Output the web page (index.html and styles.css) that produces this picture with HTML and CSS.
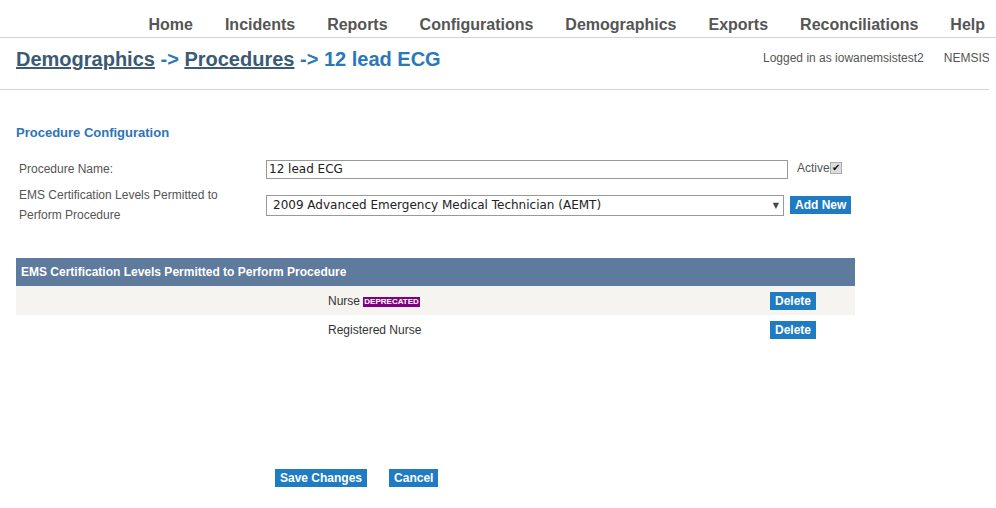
FILE: index.html
```html
<!DOCTYPE html>
<html>
<head>
<meta charset="utf-8">
<title>Procedure Configuration</title>
<link rel="stylesheet" href="styles.css">
</head>
<body>
<nav class="topnav">
  <a class="nav-item">Home</a>
  <a class="nav-item">Incidents</a>
  <a class="nav-item">Reports</a>
  <a class="nav-item">Configurations</a>
  <a class="nav-item">Demographics</a>
  <a class="nav-item">Exports</a>
  <a class="nav-item">Reconciliations</a>
  <a class="nav-item">Help</a>
</nav>
<header class="crumbbar">
  <h1 class="crumbs"><a class="crumb-link">Demographics</a> -&gt; <a class="crumb-link">Procedures</a> -&gt; 12 lead ECG</h1>
  <div class="userinfo"><span>Logged in as iowanemsistest2</span><span class="nemsis">NEMSIS 3</span></div>
</header>
<main class="content">
  <h2 class="section-title">Procedure Configuration</h2>
  <div class="form">
    <div class="label">Procedure Name:</div>
    <div class="field"><div class="textbox">12 lead ECG</div></div>
    <div class="extra active">Active<span class="check">&#10004;</span></div>

    <div class="label two">EMS Certification Levels Permitted to Perform Procedure</div>
    <div class="field"><div class="selectbox"><span>2009 Advanced Emergency Medical Technician (AEMT)</span><span class="arrow">&#9660;</span></div></div>
    <div class="extra"><span class="btn">Add New</span></div>
  </div>

  <div class="grid">
    <div class="grid-head">EMS Certification Levels Permitted to Perform Procedure</div>
    <div class="grid-row alt">
      <div class="name">Nurse <span class="badge">DEPRECATED</span></div>
      <div class="act"><span class="btn">Delete</span></div>
    </div>
    <div class="grid-row">
      <div class="name">Registered Nurse</div>
      <div class="act"><span class="btn">Delete</span></div>
    </div>
  </div>

  <div class="actions">
    <span class="btn">Save Changes</span>
    <span class="btn">Cancel</span>
  </div>
</main>
</body>
</html>
```
FILE: styles.css
```css
html, body { margin: 0; padding: 0; background: #fff; }
body { font-family: "Liberation Sans", Arial, sans-serif; color: #555; width: 996px; overflow: hidden; }

.topnav {
  display: flex;
  justify-content: flex-end;
  height: 38px;
  border-bottom: 1px solid #d3d3d3;
  padding-right: 11px;
  box-sizing: border-box;
  align-items: flex-end;
}
.nav-item {
  font-size: 16px;
  font-weight: bold;
  color: #555;
  margin-left: 32px;
  line-height: 20px;
  padding-bottom: 2px;
}

.crumbbar {
  width: 989px;
  height: 52px;
  border-bottom: 1px solid #d3d3d3;
  box-sizing: border-box;
  display: flex;
  justify-content: space-between;
  align-items: flex-start;
  padding-left: 16px;
  overflow: hidden;
}
.crumbs {
  margin: 9px 0 0 0;
  font-size: 20px;
  font-weight: bold;
  color: #2a78b9;
  line-height: 24px;
}
.crumb-link { color: #3a5a75; text-decoration: underline; }
.userinfo {
  font-size: 12px;
  color: #555;
  margin-top: 13px;
  white-space: nowrap;
  width: 226px;
  flex: none;
}
.nemsis { margin-left: 20px; }

.content { padding-left: 16px; }
.section-title {
  margin: 35px 0 18px 0;
  font-size: 13px;
  line-height: 16px;
  font-weight: bold;
  color: #2e74b5;
}

.form {
  display: grid;
  grid-template-columns: 247px 522px auto;
  row-gap: 6px;
  align-items: center;
  padding-left: 3px;
}
.label { font-size: 12px; line-height: 20px; color: #555; }
.label.two { width: 210px; }
.textbox {
  height: 19px;
  border: 1px solid #999;
  box-sizing: border-box;
  font-family: "DejaVu Sans", Verdana, sans-serif;
  font-size: 12px;
  line-height: 17px;
  padding-left: 2px;
  color: #222;
}
.selectbox {
  width: 518px;
  height: 21px;
  border: 1px solid #999;
  box-sizing: border-box;
  font-family: "DejaVu Sans", Verdana, sans-serif;
  font-size: 12px;
  line-height: 19px;
  padding-left: 6px;
  padding-right: 4px;
  color: #222;
  display: flex;
  justify-content: space-between;
}
.arrow { font-size: 8px; color: #444; }
.extra { padding-left: 9px; font-size: 12px; }
.form .extra:last-child { padding-left: 2px; }
.active { display: flex; align-items: center; margin-top: -2px; }
.check {
  display: inline-flex;
  align-items: center;
  justify-content: center;
  width: 10px;
  height: 10px;
  border: 1px solid #aaa;
  background: #ddd;
  font-size: 10px;
  color: #111;
  line-height: 10px;
}

.btn {
  display: inline-block;
  background: #1f7bc2;
  color: #fff;
  font-weight: bold;
  font-size: 12px;
  line-height: 18px;
  padding: 0 5px;
}

.grid {
  margin-top: 33px;
  width: 839px;
}
.grid-head {
  background: #5e7b9d;
  color: #fff;
  font-weight: bold;
  font-size: 12px;
  height: 28px;
  line-height: 28px;
  padding-left: 5px;
}
.grid-row {
  display: flex;
  align-items: center;
  height: 29px;
  font-size: 12px;
  color: #333;
}
.grid-row.alt { background: #f5f4f0; }
.name { padding-left: 312px; width: 442px; flex: none; }
.act { flex: none; }
.badge {
  display: inline-block;
  background: #800080;
  color: #fff;
  font-size: 8px;
  font-weight: bold;
  line-height: 10px;
  padding: 0 1px;
  vertical-align: 1px;
}

.actions {
  margin-top: 125px;
  padding-left: 259px;
  display: flex;
  gap: 22px;
}
```
